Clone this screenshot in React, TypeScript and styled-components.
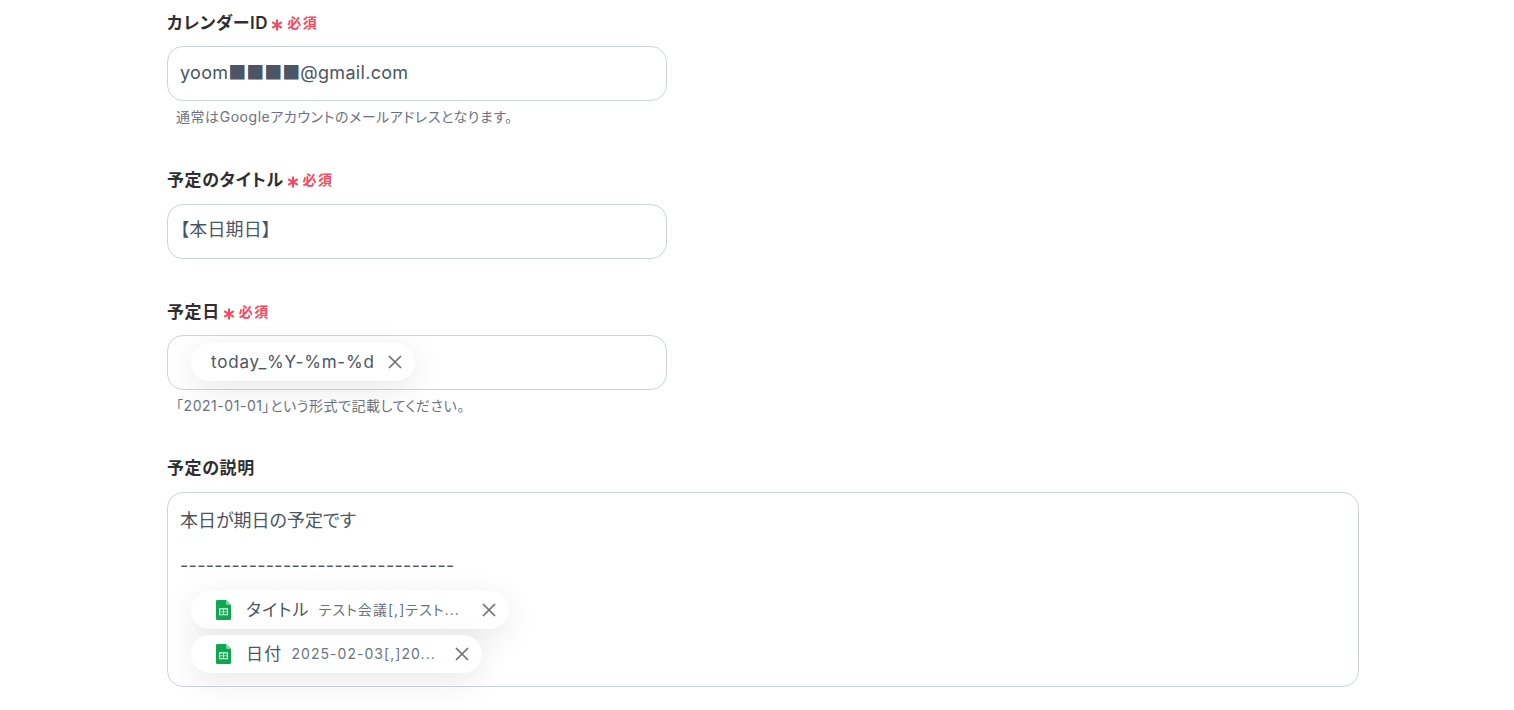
import React from "react";
import styled, { createGlobalStyle } from "styled-components";

const Global = createGlobalStyle`
  html, body { margin: 0; padding: 0; background: #fff; overflow: hidden; }
  body { font-family: Inter, "Noto Sans CJK JP", sans-serif; font-feature-settings: "palt"; }
`;

const Page = styled.main`
  width: 1192px;
  height: 710px;
  margin-left: 167px;
  padding-top: 11px;
  box-sizing: border-box;
  display: flex;
  flex-direction: column;
`;

const Field = styled.section<{ $gap: number }>`
  display: flex;
  flex-direction: column;
  margin-bottom: ${(p) => p.$gap}px;
`;

const LabelRow = styled.div<{ $mb: number }>`
  display: flex;
  align-items: center;
  height: 24px;
  margin-bottom: ${(p) => p.$mb}px;
`;

const Label = styled.span`
  font-size: 17px;
  font-weight: 600;
  line-height: 24px;
  letter-spacing: 0.6px;
  color: #2f2f33;
`;

const Star = styled.svg`
  width: 12px;
  height: 12px;
  margin: 4px 4px 0 3px;
`;

const Required = styled.span`
  font-size: 14px;
  font-weight: 600;
  line-height: 24px;
  letter-spacing: 1.4px;
  color: #f9475e;
`;

const Box = styled.div<{ $wide?: boolean }>`
  box-sizing: border-box;
  width: ${(p) => (p.$wide ? "1192px" : "500px")};
  height: ${(p) => (p.$wide ? "195px" : "55px")};
  border: 1px solid #cdd3de;
  border-radius: 16px;
  padding: ${(p) => (p.$wide ? "16px 12px 0" : "0 12px 1px")};
  background: #fff;
  display: flex;
  flex-direction: ${(p) => (p.$wide ? "column" : "row")};
  align-items: ${(p) => (p.$wide ? "flex-start" : "center")};
  color: #4b5563;
  font-size: 18px;
`;

const BoxText = styled.span<{ $up?: number; $track: number }>`
  line-height: 24px;
  white-space: pre;
  margin-top: ${(p) => -(p.$up ?? 0)}px;
  letter-spacing: ${(p) => p.$track}px;
`;

const Squares = styled.span`
  font-family: "Noto Sans CJK JP", sans-serif;
  font-feature-settings: normal;
  letter-spacing: 0;
`;

const Note = styled.p`
  margin: 7px 0 0 9px;
  font-size: 14px;
  line-height: 17px;
  letter-spacing: 0.55px;
  color: #6b7280;
`;

const Line = styled.div<{ $mb: number; $track: number }>`
  line-height: 24px;
  height: 24px;
  white-space: pre;
  margin-bottom: ${(p) => p.$mb}px;
  letter-spacing: ${(p) => p.$track}px;
`;

const Chip = styled.div<{ $w: number }>`
  box-sizing: border-box;
  width: ${(p) => p.$w}px;
  height: 38px;
  margin-left: 11px;
  border-radius: 19px;
  background: #fff;
  box-shadow: 0 8px 30px rgba(40, 44, 60, 0.1);
  display: flex;
  align-items: center;
  padding: 0 12px 0 20px;
  flex-shrink: 0;
  & + & { margin-top: 6px; }
`;

const ChipText = styled.span`
  font-size: 17px;
  line-height: 24px;
  letter-spacing: 0.8px;
  color: #4b5563;
  white-space: nowrap;
`;

const ChipName = styled(ChipText)`
  margin-left: 15px;
  letter-spacing: 1.2px;
`;

const ChipValue = styled.span`
  margin-left: 9px;
  font-size: 14px;
  line-height: 20px;
  letter-spacing: 1.05px;
  color: #6b7280;
  white-space: nowrap;
`;

const Close = styled.svg`
  width: 16px;
  height: 16px;
  margin-left: auto;
  flex-shrink: 0;
`;

const SheetSvg = styled.svg`
  width: 15px;
  height: 20px;
  margin-left: 5px;
  flex-shrink: 0;
`;

const Asterisk = () => (
  <Star viewBox="0 0 12 12" fill="none" stroke="#f9475e" strokeWidth="2.1" strokeLinecap="butt">
    <path d="M6 .5v11M1.2 3.2l9.6 5.6M10.8 3.2l-9.6 5.6" />
  </Star>
);

const X = () => (
  <Close viewBox="0 0 16 16" fill="none" stroke="#707070" strokeWidth="1.7">
    <path d="M2 2l12 12M14 2L2 14" />
  </Close>
);

const Sheet = () => (
  <SheetSvg viewBox="0 0 15 20">
    <path d="M1.2 0H10L15 5V18.8a1.2 1.2 0 0 1-1.2 1.2H1.2A1.2 1.2 0 0 1 0 18.8V1.2A1.2 1.2 0 0 1 1.2 0Z" fill="#0da84f" />
    <path d="M10 0L15 5H11.2A1.2 1.2 0 0 1 10 3.8Z" fill="#7ad3a0" />
    <path d="M3 8.3h9v7H3Zm1.1 1.1v2h3v-2Zm3.8 0v2h3v-2Zm-3.8 2.9v1.9h3v-1.9Zm3.8 0v1.9h3v-1.9Z" fill="#e3f7ea" fillRule="evenodd" />
  </SheetSvg>
);

export default function App() {
  return (
    <Page>
      <Global />
      <Field $gap={43}>
        <LabelRow $mb={11}>
          <Label>カレンダーID</Label>
          <Asterisk />
          <Required>必須</Required>
        </LabelRow>
        <Box>
          <BoxText $up={2} $track={0.3}>yoom<Squares>■■■■</Squares>@gmail.com</BoxText>
        </Box>
        <Note>通常はGoogleアカウントのメールアドレスとなります。</Note>
      </Field>
      <Field $gap={41}>
        <LabelRow $mb={12}>
          <Label>予定のタイトル</Label>
          <Asterisk />
          <Required>必須</Required>
        </LabelRow>
        <Box>
          <BoxText $up={3} $track={0.2}>【本日期日】</BoxText>
        </Box>
      </Field>
      <Field $gap={42}>
        <LabelRow $mb={11}>
          <Label>予定日</Label>
          <Asterisk />
          <Required>必須</Required>
        </LabelRow>
        <Box>
          <Chip $w={224}>
            <ChipText>today_%Y-%m-%d</ChipText>
            <X />
          </Chip>
        </Box>
        <Note>「2021-01-01」という形式で記載してください。</Note>
      </Field>
      <Field $gap={0}>
        <LabelRow $mb={12}>
          <Label>予定の説明</Label>
        </LabelRow>
        <Box $wide>
          <Line $mb={21} $track={0}>本日が期日の予定です</Line>
          <Line $mb={13} $track={0.3}>--------------------------------</Line>
          <Chip $w={318}>
            <Sheet />
            <ChipName>タイトル</ChipName>
            <ChipValue>テスト会議[,]テスト...</ChipValue>
            <X />
          </Chip>
          <Chip $w={291}>
            <Sheet />
            <ChipName>日付</ChipName>
            <ChipValue>2025-02-03[,]20...</ChipValue>
            <X />
          </Chip>
        </Box>
      </Field>
    </Page>
  );
}
